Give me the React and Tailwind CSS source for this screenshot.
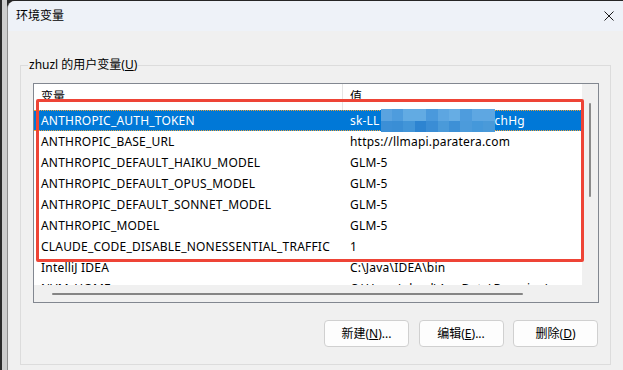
import React from 'react';

const rows = [
  { name: 'ANTHROPIC_AUTH_TOKEN', value: 'token', selected: true },
  { name: 'ANTHROPIC_BASE_URL', value: 'https://llmapi.paratera.com' },
  { name: 'ANTHROPIC_DEFAULT_HAIKU_MODEL', value: 'GLM-5' },
  { name: 'ANTHROPIC_DEFAULT_OPUS_MODEL', value: 'GLM-5' },
  { name: 'ANTHROPIC_DEFAULT_SONNET_MODEL', value: 'GLM-5' },
  { name: 'ANTHROPIC_MODEL', value: 'GLM-5' },
  { name: 'CLAUDE_CODE_DISABLE_NONESSENTIAL_TRAFFIC', value: '1' },
  { name: 'IntelliJ IDEA', value: 'C:\\Java\\IDEA\\bin' },
  { name: 'NVM_HOME', value: 'C:\\Users\\zhuzl\\AppData\\Roaming\\nvm' },
];

// blurred token, two rows of blocks
const mosaicTop = ['#5aa3e0', '#4e9cdd', '#62abe3', '#62abe3', '#4a99dc', '#5da6e1', '#66ade4', '#4e9cdd', '#5ea7e2', '#5ea7e2'];
const mosaicBottom = ['#3c8fd6', '#3a8ed5', '#4295d8', '#2d84d1', '#3a8dd5', '#4a9ad9', '#3d90d6', '#4c9bdb', '#4598da', '#4a9ad9'];

const Mosaic = () => (
  <span className="inline-flex flex-col w-[114px] h-[23px] ml-[1px] shrink-0">
    <span className="flex flex-1">
      {mosaicTop.map((c, i) => (
        <span key={i} className="flex-1" style={{ backgroundColor: c }} />
      ))}
    </span>
    <span className="flex flex-1">
      {mosaicBottom.map((c, i) => (
        <span key={i} className="flex-1" style={{ backgroundColor: c }} />
      ))}
    </span>
  </span>
);

const Button = ({ label, hotkey, dots }) => (
  <button className="w-[85px] h-[27px] rounded-[4px] border border-[#d0d0d0] bg-[#fdfdfd] text-[12px] text-black flex items-center justify-center">
    {label}(<span className="underline">{hotkey}</span>){dots ? '...' : ''}
  </button>
);

export default function App() {
  return (
    <div className="w-[623px] h-[370px] flex bg-[#262626] overflow-hidden text-black font-['Noto_Sans','Noto_Sans_CJK_SC',sans-serif]">
      <div className="w-[2px] shrink-0 bg-[#2b2b2b]" />
      <div className="w-[5px] shrink-0 bg-[#cdcdcd]" />

      <div className="flex-1 mt-[1px] flex flex-col bg-[#f0f0f0] rounded-tl-[8px] border-l border-[#8e8e8e] overflow-hidden">
        {/* title bar */}
        <div className="h-[30px] shrink-0 bg-[#eef2f8] flex items-center justify-between pl-[8px] pr-[9px]">
          <span className="text-[12px]">环境变量</span>
          <svg width="10" height="10" viewBox="0 0 10 10" className="text-[#1a1a1a]">
            <path d="M0.5 0.5 L9.5 9.5 M9.5 0.5 L0.5 9.5" stroke="currentColor" strokeWidth="1" />
          </svg>
        </div>

        <div className="flex-1 pl-[12px] pt-[26px]">
          <fieldset className="w-[591px] min-w-0 border border-[#dcdcdc] pb-[17px]">
            <legend className="ml-[7px] px-[1px] text-[12px] leading-[16px]">
              zhuzl 的用户变量(<span className="underline">U</span>)
            </legend>

            {/* list view */}
            <div className="relative ml-[12px] mt-[10px] w-[566px] h-[220px] border border-[#828790] bg-white grid grid-cols-[548px_16px] grid-rows-[201px_17px] text-[12px]">
              <div className="overflow-hidden flex flex-col">
                <div className="h-[26px] shrink-0 flex">
                  <div className="w-[309px] shrink-0 flex items-center pl-[7px] border-r border-[#e5e5e5]">变量</div>
                  <div className="flex items-center pl-[7px]">值</div>
                </div>
                {rows.map((r) => (
                  <div
                    key={r.name}
                    className={
                      r.selected
                        ? 'h-[21px] shrink-0 flex items-center whitespace-nowrap tracking-[0.2px] bg-[#0078d7] text-white border-y border-dotted border-[#e9a23b]'
                        : 'h-[21px] shrink-0 flex items-center whitespace-nowrap tracking-[0.2px]'
                    }
                  >
                    <div className="w-[309px] shrink-0 pl-[7px]">{r.name}</div>
                    <div className="pl-[7px] flex items-center">
                      {r.selected ? (
                        <>
                          <span>sk-LL</span>
                          <Mosaic />
                          <span>chHg</span>
                        </>
                      ) : (
                        r.value
                      )}
                    </div>
                  </div>
                ))}
              </div>

              {/* vertical scrollbar */}
              <div className="bg-[#f0f0f0]">
                <div className="mt-[19px] ml-[7px] w-[2px] h-[94px] rounded-full bg-[#8a8a8a]" />
              </div>
              {/* horizontal scrollbar */}
              <div className="bg-[#f0f0f0]">
                <div className="mt-[8px] ml-[18px] w-[471px] h-[2px] rounded-full bg-[#858585]" />
              </div>
              <div className="bg-[#f0f0f0]" />

              {/* red annotation box */}
              <div className="absolute left-[2px] top-[15px] w-[548px] h-[163px] border-[3px] border-[#ee4436] rounded-[2px] pointer-events-none" />
            </div>

            <div className="flex justify-end gap-[9.5px] mt-[17px] pr-[12px]">
              <Button label="新建" hotkey="N" dots />
              <Button label="编辑" hotkey="E" dots />
              <Button label="删除" hotkey="D" />
            </div>
          </fieldset>
        </div>
      </div>
    </div>
  );
}
